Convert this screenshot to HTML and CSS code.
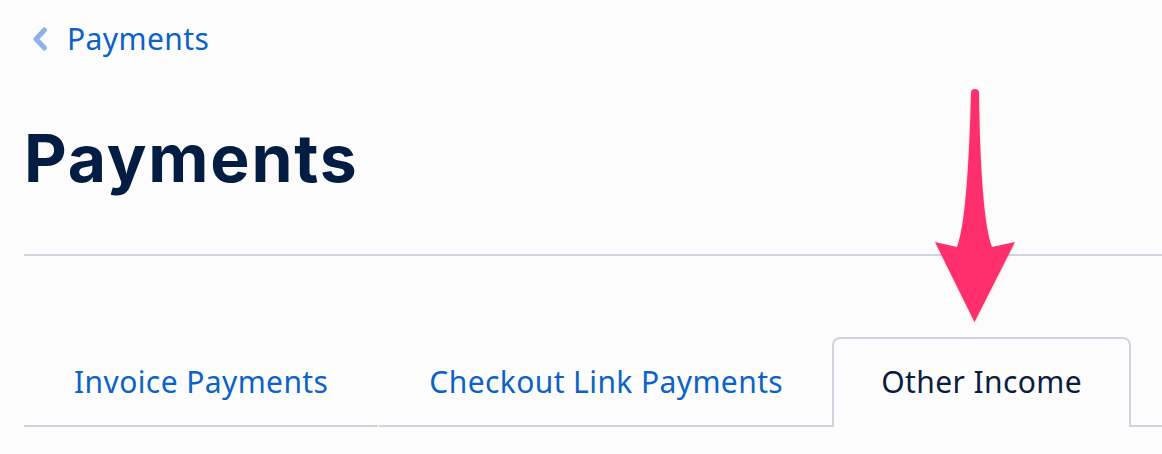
FILE: index.html
```html
<!DOCTYPE html>
<html lang="en">
<head>
<meta charset="utf-8">
<title>Payments</title>
<link rel="stylesheet" href="styles.css">
</head>
<body>
<div class="page">
  <a class="back" href="#">
    <svg class="chev" viewBox="0 0 18 26" width="18" height="26" aria-hidden="true">
      <path d="M13.5 4 L5 13 L13.5 22" fill="none" stroke="#8cb1e8" stroke-width="5" stroke-linecap="round" stroke-linejoin="round"/>
    </svg>
    <span>Payments</span>
  </a>
  <h1 class="title">Payments</h1>
  <div class="divider"></div>
  <nav class="tabs">
    <a class="tab" href="#">Invoice Payments</a>
    <a class="tab tab-mid" href="#">Checkout Link Payments</a>
    <a class="tab active" href="#">Other Income</a>
    <span class="tab-fill"></span>
  </nav>
</div>
<svg class="arrow" viewBox="930 85 90 240" width="90" height="240" aria-hidden="true">
  <path d="M971 93 A4 4 0 0 1 979 93 C980 170 984 226 992 247 L1015 242 L974.5 322 L935 242 L957 247 C965 226 969 170 971 93 Z" fill="#fe2f6c"/>
</svg>
</body>
</html>
```

FILE: styles.css
```css
html, body {
  margin: 0;
  padding: 0;
  background: #fdfcfc;
}

body {
  font-family: "Noto Sans", Roboto, sans-serif;
  width: 1162px;
  height: 454px;
  overflow: hidden;
  position: relative;
}

.page {
  padding-left: 24px;
  padding-top: 19px;
}

.back {
  display: flex;
  align-items: center;
  gap: 18px;
  height: 40px;
  padding-left: 7px;
  color: #0b63c6;
  text-decoration: none;
  font-size: 30px;
  letter-spacing: 0.4px;
  line-height: 40px;
}

.chev {
  display: block;
}

.title {
  margin: 0;
  margin-top: 59px;
  font-family: Inter, "Liberation Sans", sans-serif;
  font-weight: 700;
  font-size: 66px;
  line-height: 80px;
  letter-spacing: 1.8px;
  color: #031c42;
}

.divider {
  margin-top: 56px;
  height: 2px;
  background: #d0d4de;
}

.tabs {
  display: flex;
  align-items: flex-end;
  margin-top: 81px;
}

.tab {
  display: block;
  box-sizing: border-box;
  height: 90px;
  padding: 2px 50px 0;
  line-height: 86px;
  font-size: 30px;
  letter-spacing: 0.4px;
  color: #0b63c6;
  text-decoration: none;
  border-bottom: 2px solid #d0d4de;
  white-space: nowrap;
}

.tab-mid {
  margin-left: 1px;
  padding: 2px 49px 0 50px;
}

.tab.active {
  color: #0b1d3f;
  border: 2px solid #d0d4de;
  border-bottom: none;
  border-radius: 8px 8px 0 0;
  padding: 0 47px 2px;
}

.tab-fill {
  flex: 1;
  height: 0;
  border-bottom: 2px solid #d0d4de;
}

.arrow {
  position: absolute;
  left: 930px;
  top: 85px;
  filter: drop-shadow(0 1px 1px rgba(0, 0, 0, 0.18));
}
```
